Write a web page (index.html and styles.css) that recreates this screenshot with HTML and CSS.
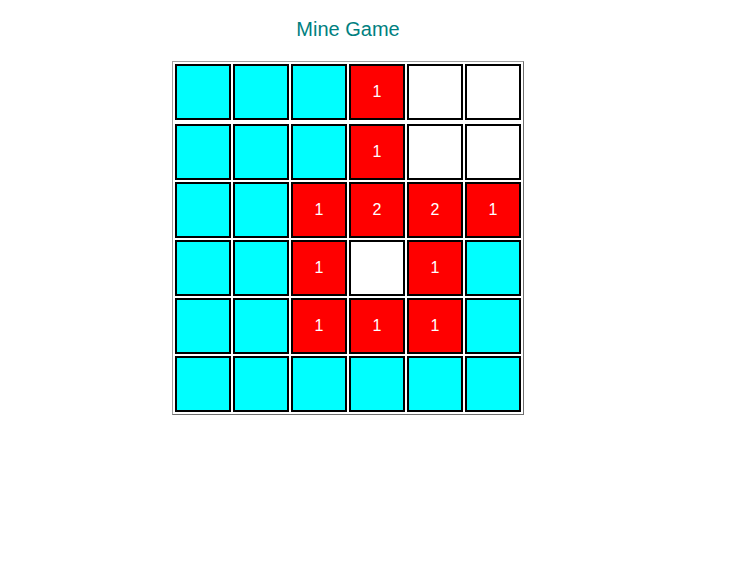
FILE: index.html
```html
<!DOCTYPE html>
<html>
<head>
<meta charset="utf-8">
<title>Mine Game</title>
<link rel="stylesheet" href="styles.css">
</head>
<body>
<div class="wrap">
  <h1 class="title">Mine Game</h1>
  <div class="board">
    <div class="row first">
      <div class="cell c"></div><div class="cell c"></div><div class="cell c"></div><div class="cell r">1</div><div class="cell w"></div><div class="cell w"></div>
    </div>
    <div class="row">
      <div class="cell c"></div><div class="cell c"></div><div class="cell c"></div><div class="cell r">1</div><div class="cell w"></div><div class="cell w"></div>
    </div>
    <div class="row">
      <div class="cell c"></div><div class="cell c"></div><div class="cell r">1</div><div class="cell r">2</div><div class="cell r">2</div><div class="cell r">1</div>
    </div>
    <div class="row">
      <div class="cell c"></div><div class="cell c"></div><div class="cell r">1</div><div class="cell w"></div><div class="cell r">1</div><div class="cell c"></div>
    </div>
    <div class="row">
      <div class="cell c"></div><div class="cell c"></div><div class="cell r">1</div><div class="cell r">1</div><div class="cell r">1</div><div class="cell c"></div>
    </div>
    <div class="row">
      <div class="cell c"></div><div class="cell c"></div><div class="cell c"></div><div class="cell c"></div><div class="cell c"></div><div class="cell c"></div>
    </div>
  </div>
</div>
</body>
</html>
```

FILE: styles.css
```css
html, body {
  margin: 0;
  padding: 0;
  background: #ffffff;
}
body {
  font-family: "Liberation Sans", Arial, sans-serif;
}
.wrap {
  width: 680px;
  margin-left: 8px;
  padding-top: 18px;
  display: flex;
  flex-direction: column;
  align-items: center;
}
.title {
  margin: 0 0 20px 0;
  font-size: 20px;
  line-height: 23px;
  font-weight: normal;
  color: #008080;
}
.board {
  display: flex;
  flex-direction: column;
  gap: 2px;
  padding: 2px;
  border: 1px solid;
  border-color: #a0a0a0 #6e6e6e #6e6e6e #a0a0a0;
}
.row {
  display: flex;
  gap: 2px;
}
.row.first {
  margin-bottom: 2px;
}
.cell {
  width: 52px;
  height: 52px;
  border: 2px solid #000000;
  display: flex;
  align-items: center;
  justify-content: center;
  font-size: 16px;
  color: #ffffff;
}
.c { background: #00ffff; }
.r { background: #ff0000; }
.w { background: #ffffff; }
```
